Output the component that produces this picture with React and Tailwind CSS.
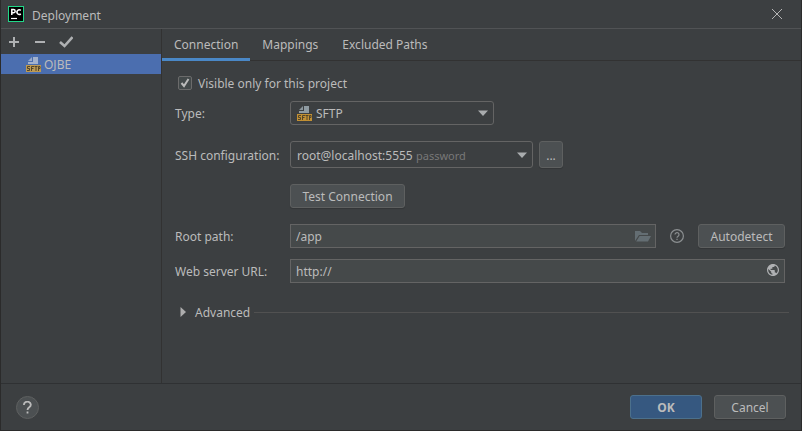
import React from "react";

const button =
  "h-6 rounded-[3px] border border-[#5e6060] bg-[#4c5052] pt-[2px] text-center shadow-[0_1px_1px_rgba(0,0,0,0.15)]";
const field =
  "h-6 w-full border border-[#646464] bg-[#45494a] pl-[5px] text-[#bbbbbb] outline-none";
const select =
  "w-full appearance-none rounded-[3px] border border-[#646464] bg-[#3c3f41] pt-[2px] text-[#bbbbbb] outline-none";
const rowLabel = "w-[115px] shrink-0 pt-[2px]";

function PyCharmLogo() {
  return (
    <svg className="h-4 w-4" viewBox="0 0 16 16" aria-hidden="true">
      <rect width="16" height="16" fill="#21d789" />
      <rect x="1" y="1" width="14" height="14" fill="#000" />
      <path d="M3.800 9V3.500h1.700a1.600 1.600 0 0 1 0 3.300H3.800" fill="none" stroke="#fff" strokeWidth="1.500" />
      <path d="M12.800 4.400A2.300 2.300 0 1 0 12.800 7.900" fill="none" stroke="#fff" strokeWidth="1.500" />
      <path d="M3 12.500h6" stroke="#fff" strokeWidth="1.200" />
    </svg>
  );
}

function SftpIcon({ selected }) {
  return (
    <svg className="h-4 w-4 shrink-0" viewBox="0 0 16 16" aria-hidden="true">
      <path d="M7 1v4H3z" fill={selected ? "#9aabc9" : "#8a959c"} />
      <path d="M8 1h5v7H3V6h5z" fill={selected ? "#a2b2ce" : "#8f9ba2"} />
      <rect x="1" y="9" width="15" height="7" fill={selected ? "#bd9a52" : "#c29033"} />
      <path
        d="M5 10.500H2.500v2h2v2H2M6.500 15v-4.500H9M6.500 12.500h2M9.500 10.500h3M11 10.500V15M13.500 15v-4.500H15v2h-1.500"
        fill="none"
        stroke="#51452c"
        strokeWidth="1"
      />
    </svg>
  );
}

function Arrow() {
  return (
    <svg
      className="pointer-events-none absolute top-1/2 right-[6px] h-[6px] w-[10px] -translate-y-1/2"
      viewBox="0 0 10 6"
      aria-hidden="true"
    >
      <path d="M0 0.500h10L5 6z" fill="#a9acae" />
    </svg>
  );
}

function Tab({ active, children }) {
  return (
    <button
      type="button"
      role="tab"
      aria-selected={Boolean(active)}
      className={
        active
          ? "h-8 border-b-[3px] border-[#4a88c7] px-3 pt-[2px]"
          : "h-8 border-b-[3px] border-transparent px-3 pt-[2px]"
      }
    >
      {children}
    </button>
  );
}

export default function App() {
  return (
    <div className="flex min-h-screen flex-col border-x border-b border-[#2b2b2b] bg-[#3c3f41] font-['Noto_Sans','Open_Sans',sans-serif] text-[12px] leading-[18px] text-[#bbbbbb]">
      <header className="flex h-[29px] shrink-0 items-center border-b border-[#515355] pr-[18px] pl-[7px]">
        <PyCharmLogo />
        <h1 className="ml-2 flex-1 pt-[3px]">Deployment</h1>
        <button aria-label="Close">
          <svg className="h-3 w-3" viewBox="0 0 12 12" aria-hidden="true">
            <path d="M1 1l10 10M11 1L1 11" stroke="#b4b4b4" strokeWidth="1" />
          </svg>
        </button>
      </header>

      <div className="flex flex-1">
        <aside className="flex w-[161px] shrink-0 flex-col border-r border-[#323232]">
          <div className="flex h-[25px] items-center gap-3 pl-[6px]">
            <button aria-label="Add">
              <svg className="h-[14px] w-[14px]" viewBox="0 0 14 14" aria-hidden="true">
                <path d="M7 2v10M2 7h10" stroke="#afb1b3" strokeWidth="2" />
              </svg>
            </button>
            <button aria-label="Remove">
              <svg className="h-[14px] w-[14px]" viewBox="0 0 14 14" aria-hidden="true">
                <path d="M2 7h10" stroke="#afb1b3" strokeWidth="2" />
              </svg>
            </button>
            <button aria-label="Use as default">
              <svg className="h-[14px] w-[14px]" viewBox="0 0 14 14" aria-hidden="true">
                <path d="M1 7l4.500 4L13.500 2" fill="none" stroke="#afb1b3" strokeWidth="2.600" />
              </svg>
            </button>
          </div>
          <button className="flex h-5 items-center gap-[3px] bg-[#4b6eaf] pl-6">
            <SftpIcon selected />
            <span className="pt-[2px]">OJBE</span>
          </button>
        </aside>

        <main className="min-w-0 flex-1">
          <div role="tablist" className="flex h-8 border-b border-[#323232]">
            <Tab active>Connection</Tab>
            <Tab>Mappings</Tab>
            <Tab>Excluded Paths</Tab>
          </div>

          <form className="pt-[13px] pr-3 pl-[13px]">
            <label className="flex h-[18px] items-center gap-[6px] pl-[3px]">
              <span className="relative h-[14px] w-[14px]">
                <input
                  type="checkbox"
                  defaultChecked
                  className="peer block h-[14px] w-[14px] appearance-none rounded-[2px] border border-[#6b6b6b] bg-[#43494a]"
                />
                <svg
                  className="pointer-events-none invisible absolute inset-0 h-[14px] w-[14px] peer-checked:visible"
                  viewBox="0 0 14 14"
                  aria-hidden="true"
                >
                  <path d="M3.500 7l2.500 3 4.500-7" fill="none" stroke="#bbbbbb" strokeWidth="2" />
                </svg>
              </span>
              <span className="pt-[2px]">Visible only for this project</span>
            </label>

            <div className="mt-[9px] flex items-center">
              <label htmlFor="type" className={rowLabel}>Type:</label>
              <div className="relative w-[204px]">
                <select id="type" className={`${select} h-6 pl-[25px]`}>
                  <option>SFTP</option>
                </select>
                <span className="pointer-events-none absolute top-1 left-[6px]">
                  <SftpIcon />
                </span>
                <Arrow />
              </div>
            </div>

            <div className="mt-4 flex items-center">
              <label htmlFor="ssh" className={rowLabel}>SSH configuration:</label>
              <div className="relative w-[243px]">
                <select id="ssh" className={`${select} h-[27px] pl-[6px]`}>
                  <option>root@localhost:5555</option>
                </select>
                <span className="pointer-events-none absolute top-[6px] left-[126px] text-[11px] text-[#787878]">
                  password
                </span>
                <Arrow />
              </div>
              <button type="button" aria-label="SSH configurations" className={`${button} ml-[6px] h-[27px] w-6`}>...</button>
            </div>

            <div className="mt-4 flex pl-[115px]">
              <button type="button" className={`${button} w-[115px]`}>Test Connection</button>
            </div>

            <div className="mt-4 flex items-center pr-1">
              <label htmlFor="root-path" className={rowLabel}>Root path:</label>
              <div className="relative flex-1">
                <input id="root-path" defaultValue="/app" className={`${field} pr-7`} />
                <button type="button" aria-label="Browse" className="absolute top-1 right-[5px]">
                  <svg className="h-4 w-4" viewBox="0 0 16 16" aria-hidden="true">
                    <path d="M0 13V3h5l2 2h6v2H4z" fill="#646e73" />
                    <path d="M4.600 8H16l-3 5.500H1.200z" fill="#646e73" />
                  </svg>
                </button>
              </div>
              <button type="button" aria-label="Path help" className="mx-[14px]">
                <svg className="h-[14px] w-[14px]" viewBox="0 0 14 14" fill="none" stroke="#8b8f91" aria-hidden="true">
                  <circle cx="7" cy="7" r="6.400" strokeWidth="1.200" />
                  <path d="M5 5.600a2 2 0 1 1 3.300 1.500C7.400 7.700 7 7.900 7 8.800M7 9.800v1.200" strokeWidth="1.200" />
                </svg>
              </button>
              <button type="button" className={`${button} w-[87px]`}>Autodetect</button>
            </div>

            <div className="mt-[11px] flex items-center pr-1">
              <label htmlFor="url" className={rowLabel}>Web server URL:</label>
              <div className="relative flex-1">
                <input id="url" defaultValue="http://" className={`${field} pr-7`} />
                <button type="button" aria-label="Open in browser" className="absolute top-[5px] right-[6px]">
                  <svg className="h-3 w-3" viewBox="2 2 20 20" fill="#afb1b3" aria-hidden="true">
                    <path d="M12 2C6.480 2 2 6.480 2 12s4.480 10 10 10 10-4.480 10-10S17.520 2 12 2zm-1 17.930c-3.950-.490-7-3.850-7-7.930 0-.620.080-1.210.210-1.790L9 15v1c0 1.100.9 2 2 2v1.930zm6.900-2.540c-.260-.810-1-1.390-1.900-1.390h-1v-3c0-.550-.450-1-1-1H8v-2h2c.550 0 1-.450 1-1V7h2c1.100 0 2-.9 2-2v-.410c2.930 1.190 5 4.060 5 7.410 0 2.080-.8 3.970-2.100 5.390z" />
                  </svg>
                </button>
              </div>
            </div>

            <div className="mt-[19px] flex items-center">
              <button type="button" aria-expanded="false" className="flex items-center gap-[9px] pl-[5px]">
                <svg className="h-[10px] w-[6px]" viewBox="0 0 6 10" aria-hidden="true">
                  <path d="M0.500 0L6 5l-5.500 5z" fill="#adadad" />
                </svg>
                <span className="pt-[2px]">Advanced</span>
              </button>
              <hr className="ml-1 flex-1 border-[#515151]" />
            </div>
          </form>
        </main>
      </div>

      <footer className="flex h-[47px] shrink-0 items-center border-t border-[#2f3133] px-[15px]">
        <button
          aria-label="Help"
          className="flex h-[23px] w-[23px] items-center justify-center rounded-full border border-[#5e6060] bg-[#4c5052]"
        >
          <svg className="h-[13px] w-[9px]" viewBox="0 0 9 13" fill="none" stroke="#bbbbbb" strokeWidth="1.800" aria-hidden="true">
            <path d="M1 4a3.400 3 0 1 1 5.500 2C5 7.100 4.500 7.500 4.500 9M4.500 10.500v2" />
          </svg>
        </button>
        <div className="ml-auto flex gap-3">
          <button className="h-6 w-[72px] rounded-[3px] border border-[#4c708c] bg-[#365880] pt-[2px] font-bold">OK</button>
          <button className={`${button} w-[72px]`}>Cancel</button>
        </div>
      </footer>
    </div>
  );
}
